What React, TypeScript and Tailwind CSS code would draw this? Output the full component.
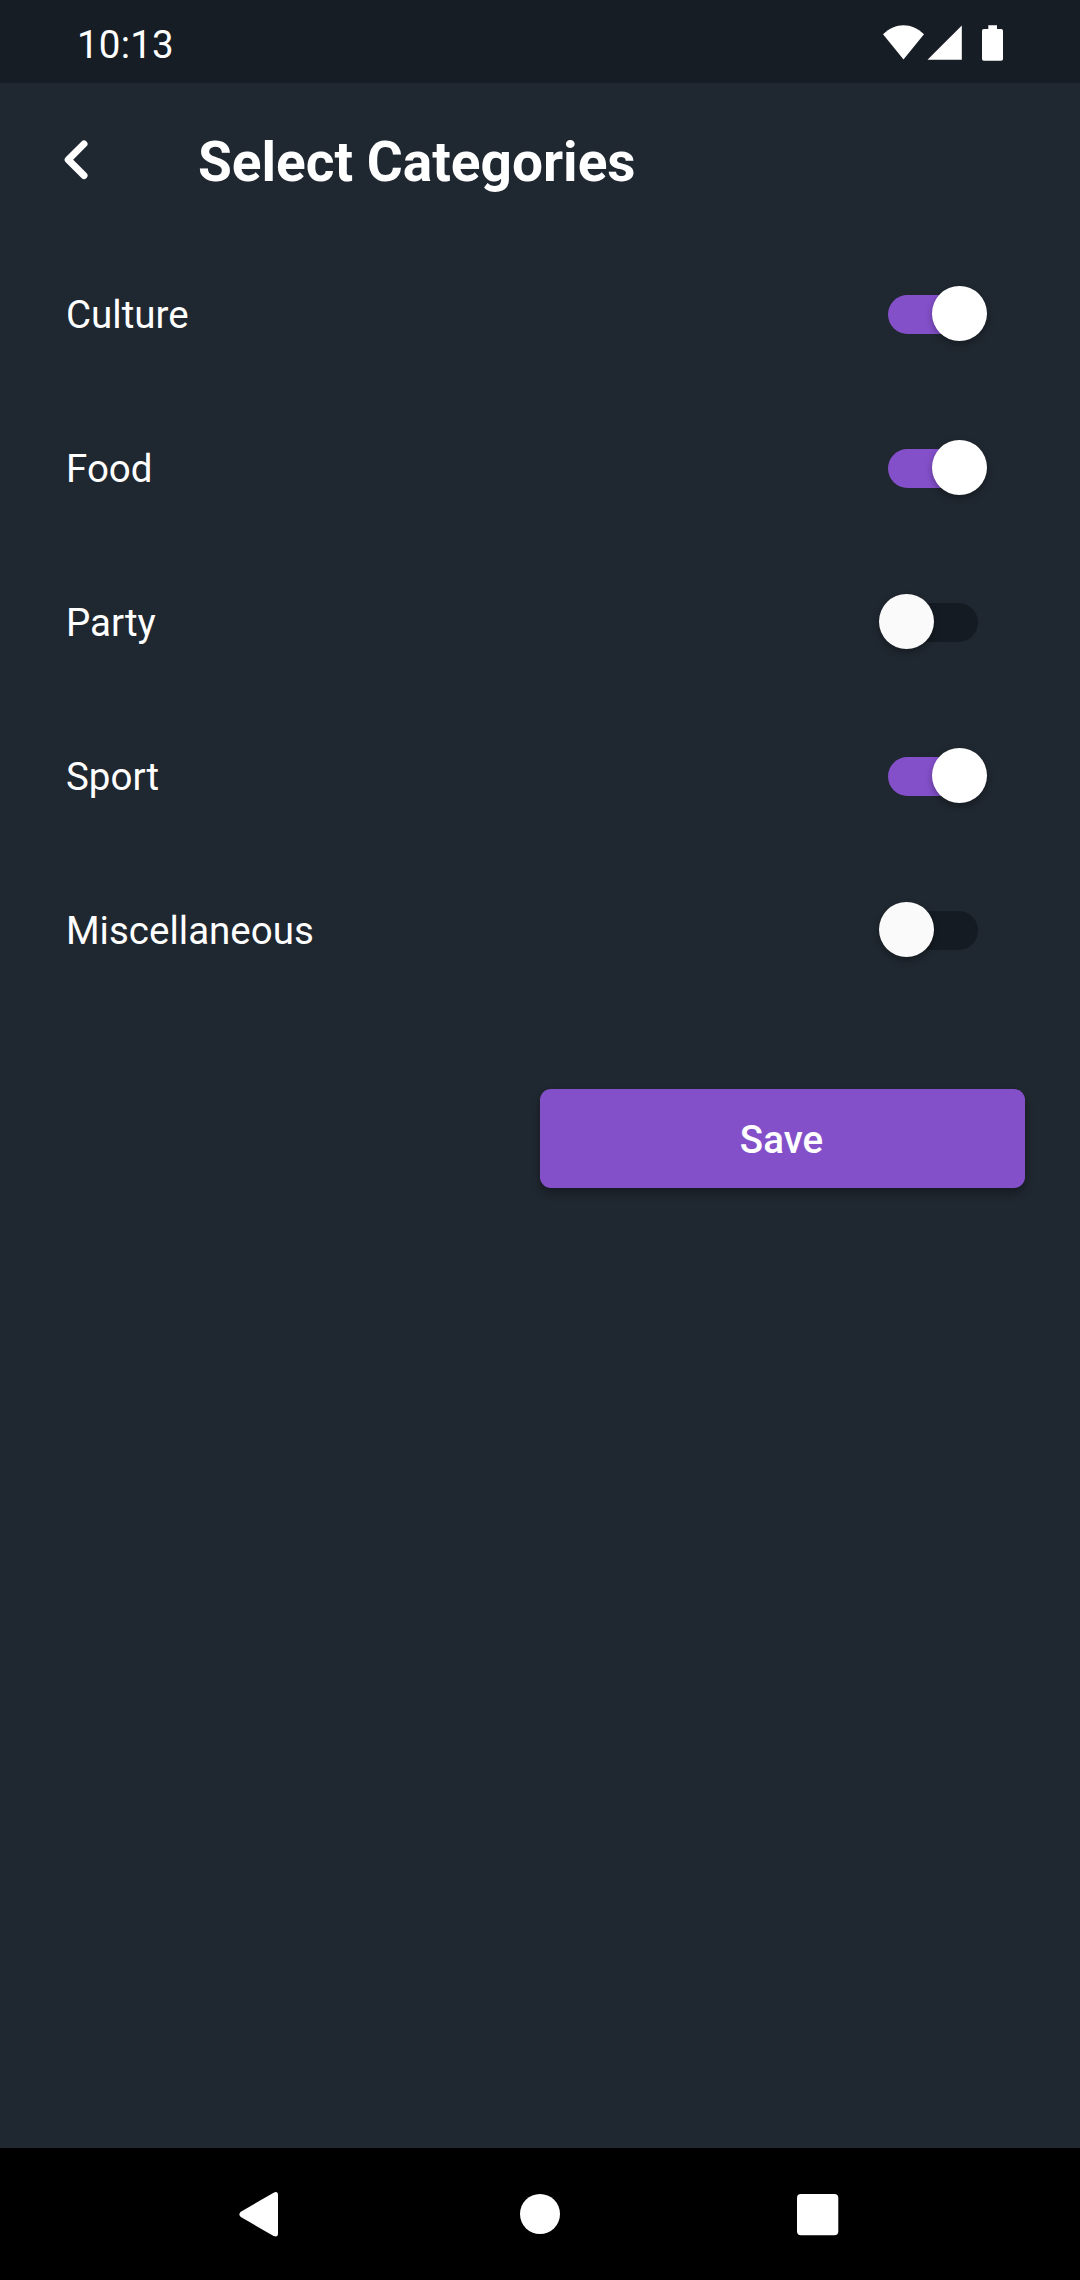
const categories = [
  { name: "Culture", on: true },
  { name: "Food", on: true },
  { name: "Party", on: false },
  { name: "Sport", on: true },
  { name: "Miscellaneous", on: false },
];

function StatusBar() {
  return (
    <header className="flex h-[83px] shrink-0 items-center justify-between bg-[#161d24] pr-[77px] pl-[77px]">
      <span className="pt-[8px] text-[38.5px] leading-none tracking-[0.2px]">10:13</span>
      <svg className="h-[83px] w-[121px]" viewBox="882 0 121 83" fill="white">
        <path d="M883 34.3C895.5 22.3 911.5 22.3 924 34.3L903.5 59.5Z" />
        <path d="M961.8 25.5V59.7H927.5Z" />
        <path d="M988.3 25.3H997V29H1001.2Q1003 29 1003 30.8V58.9Q1003 60.7 1001.2 60.7H983.8Q982 60.7 982 58.9V30.8Q982 29 983.8 29H988.3Z" />
      </svg>
    </header>
  );
}

function Toggle({ on }: { on: boolean }) {
  return (
    <div
      role="switch"
      aria-checked={on}
      className={
        on
          ? "flex h-[39px] w-[90px] items-center justify-end rounded-full bg-[#8450ca]"
          : "flex h-[39px] w-[90px] items-center justify-start rounded-full bg-[#141b22]"
      }
    >
      <span
        className={
          on
            ? "-mr-[9px] mb-[1px] size-[55px] shrink-0 rounded-full bg-white shadow-[0_3px_7px_rgba(0,0,0,0.32)]"
            : "-ml-[9px] mb-[1px] size-[55px] shrink-0 rounded-full bg-[#fafafa] shadow-[0_3px_7px_rgba(0,0,0,0.32)]"
        }
      />
    </div>
  );
}

export default function App() {
  return (
    <div className="flex h-[2280px] w-[1080px] flex-col overflow-hidden bg-[#1f2730] font-[Roboto,sans-serif] text-white">
      <StatusBar />
      <div className="flex h-[154px] shrink-0 items-center pl-[60px]">
        <svg className="h-[44px] w-[32px]" viewBox="60 138 32 44" fill="none" stroke="white" strokeWidth="7" strokeLinecap="round" strokeLinejoin="round">
          <path d="M84 143.9L68.2 159.7L84 175.5" />
        </svg>
        <h1 className="pt-[5px] pl-[106px] text-[55px] leading-none font-bold">Select Categories</h1>
      </div>
      <main className="flex flex-col">
        {categories.map((c) => (
          <div key={c.name} className="flex h-[154px] items-center justify-between pr-[102px] pl-[66px]">
            <span className="pt-[2px] text-[38.5px] leading-none">{c.name}</span>
            <Toggle on={c.on} />
          </div>
        ))}
        <div className="flex justify-end pt-[82px] pr-[55px]">
          <button className="flex h-[99px] w-[485px] items-center justify-center rounded-[11px] bg-[#8450ca] pt-[4px] pr-[2px] text-[38.5px] leading-none font-medium shadow-[0_5px_8px_rgba(0,0,0,0.3)]">
            Save
          </button>
        </div>
      </main>
      <nav className="mt-auto flex h-[132px] shrink-0 bg-black">
        <svg className="h-[132px] w-[1080px]" viewBox="0 2148 1080 132" fill="white">
          <path d="M273.6 2192.7Q278 2190.8 278 2195V2233.5Q278 2237.7 273.6 2236L240.8 2217Q238 2214.4 240.8 2211.8Z" />
          <circle cx="540" cy="2214" r="20" />
          <rect x="797" y="2194" width="41.3" height="41.3" rx="4" />
        </svg>
      </nav>
    </div>
  );
}
